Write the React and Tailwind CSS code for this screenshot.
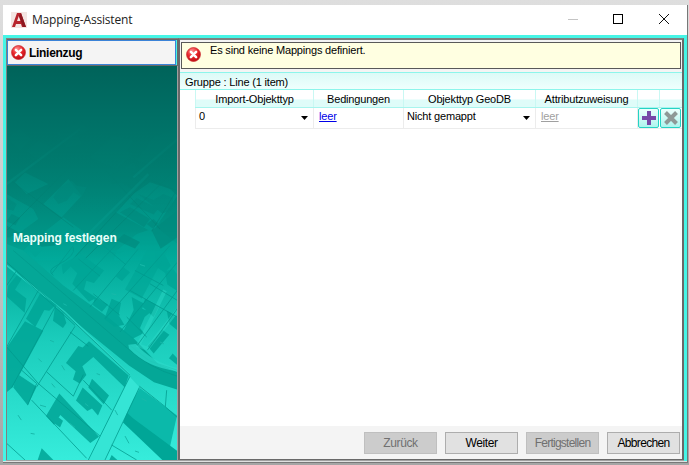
import React from "react";

function ErrorIcon() {
  return (
    <svg viewBox="0 0 16 16" className="block h-[15px] w-[15px] shrink-0">
      <defs>
        <radialGradient id="err" cx="0.4" cy="0.25" r="0.8">
          <stop offset="0" stopColor="#ff8f8f" />
          <stop offset="0.5" stopColor="#e8262b" />
          <stop offset="1" stopColor="#b80b12" />
        </radialGradient>
      </defs>
      <circle cx="8" cy="8" r="7.4" fill="url(#err)" stroke="#c9262b" strokeWidth="0.8" />
      <path d="M5.2 5.2l5.6 5.6M10.8 5.2l-5.6 5.6" stroke="#fff" strokeWidth="2.7" strokeLinecap="round" />
    </svg>
  );
}

function MapArt() {
  return (
    <svg viewBox="7 65 170 395" preserveAspectRatio="none" className="block h-full w-full">
      <defs>
        <linearGradient id="bg" x1="0" y1="65" x2="0" y2="459" gradientUnits="userSpaceOnUse">
          <stop offset="0" stopColor="#00635a" />
          <stop offset="0.25" stopColor="#00796d" />
          <stop offset="0.42" stopColor="#009385" />
          <stop offset="0.5" stopColor="#02aa9a" />
          <stop offset="0.7" stopColor="#1bcdbc" />
          <stop offset="1" stopColor="#36ecdb" />
        </linearGradient>
        <linearGradient id="haze" x1="0" y1="65" x2="0" y2="215" gradientUnits="userSpaceOnUse">
          <stop offset="0" stopColor="#00635a" />
          <stop offset="0.35" stopColor="#007066" />
          <stop offset="0.6" stopColor="#00796d" stopOpacity="0.7" />
          <stop offset="1" stopColor="#008a7d" stopOpacity="0" />
        </linearGradient>
      </defs>
      <rect x="7" y="65" width="170" height="395" fill="url(#bg)" />
      <g transform="translate(0 60) scale(0.33333)">
        <g fill="#007c70" opacity="0.4">
          <path d="M20 230l40-25 35 30-35 35zM80 270l35-30 40 20-20 35-30-5zM170 215l65-30 30 20-30 20 10 25-45 10zM270 290l70-65 60 15-20 30 20 10-50 45zM410 300l50-70 72-30v45l-80 65zM330 345l70-40 15 25-20 10 20 20-20 25-30-20-30 5z" />
        </g>
        <g fill="#00b3a2" opacity="0.27">
          <path d="M75 335l70 35-65 30-35-35zM130 430l75-75 40 50-60 65zM20 530V400l80 45 15 30-75 55zM400 400l50-35 60 20 22 20-75 110-110-60zM190 470l85 60-60 70H40l60-60zM350 570l60-50 60-20 62 50v50H340z" />
        </g>
        <g fill="#00897c" opacity="0.65">
          <path d="M160 410l20-30 35-20 15 15 30 5-15 30-25-15-20 25-25 10zM390 430l20-18 65 32-14 18zM415 400l45 18 30-18 30 12-5 35-28 12zM360 455l30-15 60 35-18 25zM440 490l20-15 15 14-18 14zM20 410l30 20-10 20-20-5zM35 460l25 12-14 22-26-12zM20 495l40 22-30 13h-10zM100 540l30-25 50 18-15 22-40 4zM350 540l22-20 48 24-15 20zM455 510l77-60v80l-50 35z" />
        </g>
        <path d="M20 510L330 195M30 350l155-120M215 600l235-255M20 350l200 150M250 600L532 320M280 290l200 215M380 330l152 60M455 512l70-115" fill="none" stroke="#007c70" strokeWidth="3" opacity="0.4" />
        <path d="M20 370L240 205M265 520L445 340M400 350L532 235" fill="none" stroke="#08a294" strokeWidth="7" opacity="0.3" />
      </g>
      <rect x="7" y="65" width="170" height="150" fill="url(#haze)" />
      <g transform="translate(0 250) scale(0.33333)">
        <path d="M20-20L70 0 190 105 330 205l70 58 75 78 57 25v52l-70-22-75-50L190 185 20 35z" fill="#04a797" />
        <path d="M40 0L380 292Q450 355 532 378" fill="none" stroke="#009184" strokeWidth="2" opacity="0.6" />
        <path d="M20 45l175 140 195 188" fill="none" stroke="#2edccb" strokeWidth="5" opacity="0.7" />
        <path d="M20 35l170 150 200 190M388 284l60 48 84 28M418 408l78 62" fill="none" stroke="#008f82" strokeWidth="2" />
        <path d="M385 283l22-2q50 55 125 72v10q-90-10-145-68z" fill="#2bd8c8" opacity="0.75" />
        <g fill="#00a596" opacity="0.85">
          <path d="M50 75l15 10-20 33 34 26-5 43-54-49 5-32zM120 130l48 33-20 18-15-2-27 51-28-25zM165 170l25 18 9 30-10 15-30-22zM75 213l55 28-92 170-18 15V292z" />
          <path d="M267 273l119 103-12 35-94-91-33 28 12 26-20 26-20-12 8-25-29-25 37-51 13 5zM276 386l51 50-16 26-46-50zM248 412l59 54-13 30-18-21-14 8-34-32zM178 430l119 130-26 19-90-84-19 29-24-26zM173 500l16 12-9 20-16-12zM125 595l35 35H113zM335 615l17 15h-24zM50 370l60 40-27 55-43-53z" />
          <path d="M240 10l72 50-30 38-23-7-7 26 37 25-22 12-50-54 15-32-20-20-23 23-4-28zM310 0h65l-18 10zM285 140l39 22-18 22-27-20zM370 50l20 15-24 27-18-14zM335 145l28 12-7 38 17 28-29 6-31-23zM395 140l38 20-7 15 26 10-18 15-14 33 12 15-34 17-28-22 31-64zM495 62l25-6 12 16v50l-30-20zM465 0l20-5 27 50-17 22-28-20zM500 180l32 20v40l-24-20zM487 238l21 15-47 57-18-22zM518 310l14 14v20l-25-20zM435 145l42 22-16 33-33-30zM90 0h35l-20 20z" />
          <path d="M440 0h62L425 144l-50-27z" opacity="0.7" />
        </g>
        <path d="M420 414l75 55 36 27-22 98-135-104z" fill="#0bb9aa" />
        <path d="M380 487l20 18 132 98v27h-45L369 517z" fill="#00a697" />
        <path d="M390 380l27 30-100 220h-50z" fill="#35e5d5" />
        <path d="M495 120L415 285l27 10 90-115" fill="none" stroke="#2edbc9" strokeWidth="12" opacity="0.45" />
        <g fill="none" stroke="#009a8d" strokeWidth="2.3">
          <path d="M155 70l65-85M220 120L350-20M270 170L415-5M315 205L510-15M360 245L532 35M412 285L532 120M442 300L532 175M310-15l68 58M235 25l65 52M405 60l85 45M280 130l80 65M390 120l142 80M450 100l82 50M380 200l60 60M50 60L20 105M50 65l175 160M115 120L20 290M168 165L35 412M225 228L110 410M210 245l55 43M140 365l80 73M220 438l30-65M250 390l85 90M390 378L265 630M418 412L315 630M20 290l95 110 140 120 45 38M95 450l165 175M110 400L83 465M20 580l55 50M500 420l-4 50 36 32M335 585l75 45M65 360l45 40" />
          <path d="M160 75q-20-15 10-30Q230 15 220-10" />
        </g>
        <path d="M115 325l10 10M185 345l9 15M290 370l10 4M255 460l10 8M54 495l10 15M92 550l12 2M375 558l12 22M405 603l12 4M425 445l15 8M150 270l12 5M120 465l18 5M335 130l14 3M420 42l15 5M190 160l10 5M210 520l15 12M345 480l8 15M155 400l10 12M480 275l12 6" fill="none" stroke="#17b9aa" strokeWidth="3" />
      </g>
    </svg>
  );
}

function Arrow() {
  return (
    <svg viewBox="0 0 7 4" className="block h-1 w-[7px]">
      <path d="M0 0h7L3.5 4z" fill="#000" />
    </svg>
  );
}

function Cell({ children, className = "" }) {
  return <div className={`h-full shrink-0 border-r ${className}`}>{children}</div>;
}

const head = "border-[#c9f8f3] text-center leading-[19px]";
const cell = "border-[#ececec] leading-[16px]";

function FooterButton({ children, disabled, className = "tracking-[-0.4px]" }) {
  return (
    <button
      disabled={disabled}
      className={`h-[22px] w-[73px] shrink-0 whitespace-nowrap border text-center text-[12px] leading-[20px] ${className} ${
        disabled ? "border-[#bfbfbf] bg-[#cccccc] text-[#707070]" : "border-[#adadad] bg-[#e1e1e1] text-black"
      }`}
    >
      {children}
    </button>
  );
}

export default function App() {
  return (
    <div className="h-[465px] w-[689px] overflow-hidden bg-gradient-to-b from-[#dedede] via-[#c8c8c8] to-[#a5a5a5] pl-[3px] pt-[5px] font-['Liberation_Sans',sans-serif] text-[11px] tracking-[-0.18px] text-black">
      <div className="flex h-[458px] w-[685px] flex-col border-b border-r border-[#777] bg-[#46f5e6]">
        <header className="flex h-[30px] shrink-0 items-center bg-white pl-2">
          <svg viewBox="0 0 16 16" className="h-4 w-4">
            <path d="M0 0h16v16H0z" fill="#f4e5e2" />
            <path d="M1 15L6 1h4l5 14h-4l-1-3H5l-1 3zM6 9h3.5L7.8 4z" fill="#b7232b" fillRule="evenodd" />
            <path d="M10 1l5 14h-3L8 4z" fill="#8d1820" />
          </svg>
          <span className="ml-[5px] font-['Open_Sans',sans-serif] text-[12px] tracking-[-0.18px] text-[#222]">Mapping-Assistent</span>
          <svg viewBox="0 0 120 30" className="ml-auto mr-[3px] h-[30px] w-[120px]" fill="none" shapeRendering="crispEdges">
            <path d="M4 14.5h10" stroke="#c4c4c4" />
            <path d="M49.5 9.5h9v9h-9z" stroke="#000" />
            <path d="M95 9l10 10M105 9L95 19" stroke="#111" shapeRendering="auto" />
          </svg>
        </header>

        <div className="ml-[3px] mt-[3px] flex h-[423px] w-[678px] shrink-0 border-b border-[#a0a0a0]">
          <aside className="flex w-[172px] shrink-0 flex-col border-l border-t border-[#808080]">
            <div className="flex h-[27px] shrink-0 flex-col border-b border-r border-t border-[#696969]">
              <div className="mr-px flex h-[25px] items-center border border-[#3b83d8] bg-[#f4f4f4] pb-px pl-[3px]">
                <ErrorIcon />
                <span className="ml-[3px] mt-[2px] text-[12px] font-bold tracking-[-0.3px]">Linienzug</span>
              </div>
            </div>
            <div className="grid min-h-0 flex-1 border-r border-[#a0a0a0]">
              <div className="col-start-1 row-start-1 h-[394px] min-h-0">
                <MapArt />
              </div>
              <span className="z-10 col-start-1 row-start-1 ml-[6px] mt-[164px] h-4 whitespace-nowrap text-[12px] font-bold leading-4 tracking-[-0.1px] text-[#eafffa]">
                Mapping festlegen
              </span>
            </div>
          </aside>

          <main className="flex w-[506px] shrink-0 flex-col border-2 border-b border-[#696969] border-t-[#808080] bg-white">
            <div className="h-8 shrink-0 bg-[#f4f4f4] px-px pt-[2px]">
              <div className="flex h-[27px] w-[500px] border border-[#595959] bg-[#ffffe1]">
                <div className="ml-[4px] mt-[4px]"><ErrorIcon /></div>
                <span className="ml-[9px] leading-[15px]">Es sind keine Mappings definiert.</span>
              </div>
            </div>
            <div className="h-[18px] shrink-0 border-b border-t border-[#8df5eb] bg-gradient-to-b from-[#dcfaf7] to-[#effffd] pl-[5px] leading-[19px]">
              Gruppe : Line (1 item)
            </div>
            <div className="ml-[15px] flex h-[18px] shrink-0 border-b border-[#a8f5ee] bg-gradient-to-b from-white from-50% to-[#dffcf9] to-60%">
              <Cell className={`${head} w-[119px] border-l`}>Import-Objekttyp</Cell>
              <Cell className={`${head} w-[90px]`}>Bedingungen</Cell>
              <Cell className={`${head} w-[132px]`}>Objekttyp GeoDB</Cell>
              <Cell className={`${head} w-[102px]`}>Attributzuweisung</Cell>
              <Cell className={`${head} w-[22px]`} />
            </div>
            <div className="ml-[15px] flex h-[21px] shrink-0 border-b border-[#ececec]">
              <Cell className={`${cell} flex w-[119px] justify-between border-l pl-[3px] pr-[5px]`}>
                <span>0</span><div className="mt-2"><Arrow /></div>
              </Cell>
              <Cell className={`${cell} w-[90px] pl-[5px] text-[#0000e8] underline`}>leer</Cell>
              <Cell className={`${cell} flex w-[132px] justify-between pl-[3px] pr-[5px]`}>
                <span>Nicht gemappt</span><div className="mt-2"><Arrow /></div>
              </Cell>
              <Cell className={`${cell} w-[102px] pl-[5px] text-[#a0a0a0] underline`}>leer</Cell>
              <button className="flex h-5 w-[21px] items-center justify-center rounded-[2px] border border-[#25d3c4] bg-gradient-to-b from-[#edfffd] to-[#adf5ee]">
                <svg viewBox="0 0 14 14" className="h-[14px] w-[14px]"><path d="M7 0v14M0 7h14" stroke="#7848a8" strokeWidth="4" /></svg>
              </button>
              <button className="ml-px flex h-5 w-[21px] items-center justify-center rounded-[2px] border border-[#25d3c4] bg-gradient-to-b from-[#edfffd] to-[#adf5ee]">
                <svg viewBox="0 0 14 14" className="h-[14px] w-[14px]"><path d="M1.5 1.5l11 11M12.5 1.5l-11 11" stroke="#8e9997" strokeWidth="4" /></svg>
              </button>
            </div>
            <div className="flex-1" />
            <footer className="flex h-[33px] shrink-0 justify-end gap-2 bg-[#f4f4f4] pr-[2px] pt-[6px]">
              <FooterButton disabled>Zurück</FooterButton>
              <FooterButton>Weiter</FooterButton>
              <FooterButton disabled className="tracking-[-0.75px]">Fertigstellen</FooterButton>
              <FooterButton className="tracking-[-0.65px]">Abbrechen</FooterButton>
            </footer>
          </main>
        </div>
        <div className="h-px shrink-0 bg-[#e0e0e0]" />
      </div>
    </div>
  );
}
